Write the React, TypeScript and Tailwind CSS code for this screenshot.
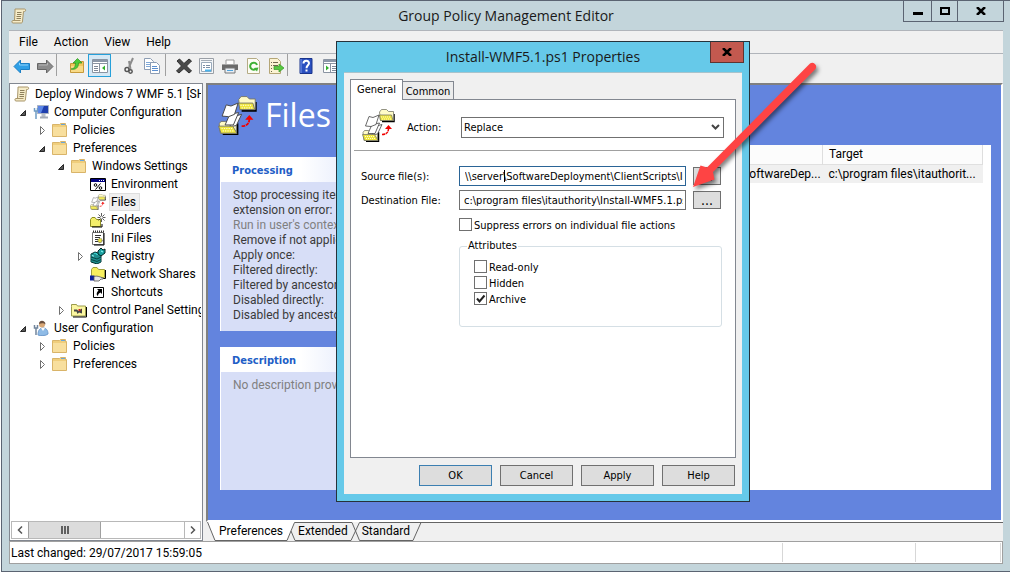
import { useState } from 'react';
import type { ReactNode } from 'react';
import clsx from 'clsx';

/* ---------- Icons ---------- */

function ScrollIcon() {
    return (
        <svg width="16" height="16" viewBox="0 0 16 16">
            <path d="M4 1h9.500c1.500 0 1.500 2.500 0 2.500H12.500L11.500 13c0 1.500-.5 2-1.500 2H2c-1.500 0-1.500-2.500 0-2.500h1.500L4 3z" fill="#f6ecc8" stroke="#a8956a" />
            <path d="M6 4.500h4.500M6 6.500h4.500M5.500 8.500H10M5.500 10.500H10" stroke="#8d7f5c" />
            <path d="M2 12.500h7.500" stroke="#a8956a" />
        </svg>
    );
}

function FolderIcon() {
    return (
        <svg width="16" height="16" viewBox="0 0 16 16">
            <path d="M.5 2.500h7l1-1h5v2h1v11H.5z" fill="#f0ce7c" stroke="#d9b469" />
            <path d="M1 5h13v9H1z" fill="#f8df9e" />
            <path d="M9 2.500h4" stroke="#6aa5d8" />
        </svg>
    );
}

function ComputerIcon() {
    return (
        <svg width="16" height="16" viewBox="0 0 16 16">
            <path d="M4.500 1.500h11v8h-11z" fill="#1f3fae" stroke="#a9b3c4" />
            <path d="M5 2h6L8 9H5z" fill="#5c86e6" />
            <path d="M8.500 10h4v3h-4z" fill="#b9bfc9" />
            <path d="M7 13.500h8" stroke="#a3aab6" strokeWidth="2" />
            <path d="M1.500 4v3h3V4M3 7v8" stroke="#6f9cc4" strokeWidth="1.500" fill="none" />
        </svg>
    );
}

function UserIcon() {
    return (
        <svg width="16" height="16" viewBox="0 0 16 16">
            <path d="M5 15c0-5 2-7 5-7s5 2 5 6c-2 2-8 2-10 1z" fill="#8fbbe6" stroke="#6f9bcc" />
            <path d="M8 8l2 3 2-3" fill="#fff" />
            <circle cx="9" cy="4.500" r="3" fill="#d9a877" />
            <path d="M6 4c0-4.500 6.500-4 6.500.5C11 3 8.500 3 6 4z" fill="#6a5040" />
            <path d="M1.500 5v3h3V5M3 8v7" stroke="#71859c" strokeWidth="1.500" fill="none" />
        </svg>
    );
}

function EnvironmentIcon() {
    return (
        <svg width="16" height="16" viewBox="0 0 16 16">
            <path d="M.5 2.500h15v12H.5z" fill="#fff" stroke="#000" />
            <path d="M1 3h14v3H1z" fill="#000080" />
            <path d="M9 4h1v1H9zM11 4h1v1h-1zM13 4h1v1h-1z" fill="#fff" />
            <path d="M10.500 7.500l-5 6" stroke="#000" />
            <circle cx="5.500" cy="9" r="1.300" fill="none" stroke="#000" />
            <circle cx="10.500" cy="12" r="1.300" fill="none" stroke="#000" />
        </svg>
    );
}

function FilesIcon({ size }: { size: number }) {
    return (
        <svg width={size} height={size} viewBox="0 0 33 33" className="shrink-0">
            {/* target folder */}
            <path d="M32 5v7.500H20" stroke="#000" strokeWidth="1.500" fill="none" />
            <path d="M17.500 3l2-2.500h5l2 2h5v9h-13z" fill="#fffbc8" stroke="#77776a" strokeWidth=".8" />
            <path d="M18.500 11.500l-1-5.500h12l1.500 5.500z" fill="#efe63c" stroke="#77776a" strokeWidth=".8" />
            {/* source folder */}
            <path d="M16.500 23v9.500H4" stroke="#000" strokeWidth="1.500" fill="none" />
            <path d="M1 23.500l1.500-2h4l2 2h7v8H2z" fill="#fffbc8" stroke="#77776a" strokeWidth=".8" />
            {/* pages */}
            <path d="M10 26l3-8.500 7-2-4.500 9.500z" fill="#fff" stroke="#444" strokeWidth=".8" />
            <path d="M6 24.500l4-9 7.500-1.500-4.500 10.500z" fill="#fff" stroke="#444" strokeWidth=".8" />
            <path d="M3.500 17l3.500-9.500 4 1 6-2.500-3 9.500-5 2z" fill="#fff" stroke="#444" strokeWidth=".8" />
            <path d="M2.500 31.500L.5 25.500h12l3.500 6z" fill="#efe63c" stroke="#77776a" strokeWidth=".8" />
            <path d="M3 27.500h9M4 29.500h9M19 8h10M20 10h10" stroke="#fffbd0" strokeDasharray="1 1" />
            {/* transfer arrow */}
            <path d="M20 25.500c4 0 6.500-2 6.500-6" stroke="#f00000" strokeWidth="1.500" strokeDasharray="3 .6" fill="none" />
            <path d="M26.500 16l-3.500 4h7z" fill="#f00000" />
        </svg>
    );
}

function NewFolderIcon() {
    return (
        <svg width="16" height="16" viewBox="0 0 16 16">
            <path d="M.5 7.500l1.500-2h3l1.500 2h4v7H.5z" fill="#f4ef6a" stroke="#8d8d20" />
            <path d="M12 12v3H2" stroke="#000" fill="none" />
            <path d="M11.500 1v9M7.500 5.500h8M8.500 2.500l6 6M14.500 2.500l-6 6" stroke="#333" strokeWidth=".8" />
            <circle cx="11.500" cy="5.500" r="1.200" fill="#fff" />
        </svg>
    );
}

function IniIcon() {
    return (
        <svg width="16" height="16" viewBox="0 0 16 16">
            <path d="M2.500 2.500h11v12h-11z" fill="#fff" stroke="#777" />
            <path d="M3 1.500h11" stroke="#333" strokeWidth="2" strokeDasharray="1 1" />
            <path d="M5 5.500h6M5 7.500h5M5 9.500h3M5 11.500h3" stroke="#333" />
            <circle cx="10" cy="10.500" r="2.200" fill="#e8e040" stroke="#555" strokeDasharray="1 .7" />
            <path d="M14 3v12H4" stroke="#000" fill="none" />
        </svg>
    );
}

function RegistryIcon() {
    return (
        <svg width="16" height="16" viewBox="0 0 16 16">
            <path d="M1 6l4-2 6 2v8l-4 2-6-2z" fill="#35c9c9" stroke="#033" />
            <path d="M1 9l6 2 4-2M1 11.500l6 2 4-2M3 5v10M7 7v9M5 6v9M9 7v8" stroke="#033" strokeWidth=".8" fill="none" />
            <path d="M8 3l3-3 2 2 2-1v4l-4 3-3-2z" fill="#1aa0a0" stroke="#022" />
            <path d="M11 3l2 1M2 7.500l2 .7" stroke="#9ff" />
        </svg>
    );
}

function NetworkIcon() {
    return (
        <svg width="16" height="16" viewBox="0 0 16 16">
            <path d="M1.500 3.500l1.500-2h4l1.500 2h6v8h-13z" fill="#f7ef5e" stroke="#a0a040" />
            <path d="M15.500 4v8.500H12" stroke="#000" fill="none" />
            <path d="M0 9.500h4.500v5H0z" fill="#0a1f9c" />
            <path d="M4 10.500c3-1 5 0 9 1.500 1 1-1 1.500-2 1l-2 2H4z" fill="#e6e6e6" stroke="#555" strokeWidth=".8" />
        </svg>
    );
}

function ShortcutIcon() {
    return (
        <svg width="16" height="16" viewBox="0 0 16 16">
            <path d="M3.500 3.500h10v10h-10z" fill="#fff" stroke="#000" />
            <path d="M7 5h5v5l-1.500-1.500C8.500 9.500 8 10.500 8 12 6 11 6.500 8.500 8.500 6.500z" fill="#000" />
        </svg>
    );
}

function ControlPanelIcon() {
    return (
        <svg width="16" height="16" viewBox="0 0 16 16">
            <path d="M.5 4.500v-2h5l1 1.500h8v10H.5z" fill="#fbf6a0" stroke="#9a9a4a" />
            <path d="M15.500 5v10H2" stroke="#000" fill="none" />
            <path d="M3 7.500h3l1.500 1.500L11 6.500v5l-3-1-1.500 1.500-1-2.500H3z" fill="#444" />
            <path d="M7.500 7h2v2h-2z" fill="#d02020" />
        </svg>
    );
}

/* ---------- Toolbar ---------- */

const toolIcon = { width: 18, height: 18, viewBox: '0 0 18 18', className: 'shrink-0' };

function ArrowToolIcon({ forward }: { forward?: boolean }) {
    return (
        <svg {...toolIcon}>
            <path
                d={forward ? 'M17 9.500L10.500 3v3.500H1.500v6h9V16z' : 'M1 9.500L7.500 3v3.500h9v6h-9V16z'}
                fill={forward ? '#8c8c8c' : '#2f9fe6'}
                stroke={forward ? '#666' : '#1c7fc4'}
            />
            <path d={forward ? 'M3 8h8.500V6' : 'M15 8H6.500V6'} stroke={forward ? '#b5b5b5' : '#8fd2fa'} fill="none" />
        </svg>
    );
}

function UpFolderIcon() {
    return (
        <svg {...toolIcon}>
            <path d="M2.500 6.500h6l1-2h6v11h-13z" fill="#f2c75c" stroke="#c79a3a" />
            <path d="M3 9h12v6H3z" fill="#f8da86" />
            <path d="M3 12c3.500 0 4.500-3 4.500-6H5L9.500 1.500 14 6h-3.500c0 5-3 7-7.500 6z" fill="#4ccb38" stroke="#2c9020" strokeWidth=".7" />
        </svg>
    );
}

function PaneIcon({ flipped }: { flipped?: boolean }) {
    return (
        <svg {...toolIcon}>
            <path d="M1.500 2.500h15v13h-15z" fill="#fff" stroke="#8a94a2" />
            <path d="M2 4h14" stroke="#8c98a8" strokeWidth="2" />
            <path d="M2 6.500h14M8.500 7v8" stroke="#8a94a2" />
            <path d={flipped ? 'M10 9.500h5M10 11.500h5M10 13.500h5' : 'M3 9.500h4M3 11.500h4M3 13.500h4'} stroke="#7d8897" />
            <path d={flipped ? 'M4 8.500v5l3-2.500z' : 'M14 8.500v5L11 11z'} fill="#31b12b" />
        </svg>
    );
}

function CutIcon() {
    return (
        <svg {...toolIcon}>
            <path d="M13 1L9 10M9 4l1.500 8" stroke="#8c8c8c" strokeWidth="2" />
            <circle cx="7" cy="12.500" r="2" fill="none" stroke="#555" strokeWidth="1.500" />
            <circle cx="10.500" cy="14.500" r="1.700" fill="none" stroke="#555" strokeWidth="1.500" />
        </svg>
    );
}

function CopyIcon() {
    return (
        <svg {...toolIcon}>
            <path d="M1.500 1.500h6l3 3v8h-9z" fill="#fff" stroke="#8d9db4" />
            <path d="M3 5.500h5M3 7.500h5M3 9.500h5" stroke="#7fa8d8" />
            <path d="M7.500 5.500h6l3 3v8h-9z" fill="#fff" stroke="#8d9db4" />
            <path d="M9 9.500h5M9 11.500h6M9 13.500h6" stroke="#5b8fd0" />
        </svg>
    );
}

function DeleteIcon() {
    return (
        <svg {...toolIcon}>
            <path d="M2 4l2.500-2L9 6.500 14 2l2.500 2-5 5 5 5-2.500 2-5-4.500L4 16l-2.500-2 5-5z" fill="#4a4a4a" stroke="#2f2f2f" />
        </svg>
    );
}

function PropertiesIcon() {
    return (
        <svg {...toolIcon}>
            <path d="M1.500 1.500h14v15h-14z" fill="#f4f6f8" stroke="#9a9fa6" />
            <path d="M3 3.500h11" stroke="#a4acb6" />
            <path d="M3.500 5.500h10v9h-10z" fill="#fff" stroke="#9aaabb" />
            <path d="M5 8.500h2M8 8.500h4M5 10.500h2M8 10.500h4" stroke="#7b8da4" />
            <path d="M7 13.500h6" stroke="#4ab2ea" strokeWidth="2" />
        </svg>
    );
}

function PrintIcon() {
    return (
        <svg {...toolIcon}>
            <path d="M5 3h8v5H5z" fill="#fff" stroke="#999" />
            <path d="M1 7h16v6H1z" fill="#6a6a6a" />
            <path d="M1 7.500h16" stroke="#a5a5a5" />
            <path d="M4 11h10v5H4z" fill="#e8eef5" stroke="#777" />
            <path d="M6 13.500h6" stroke="#4fa3dc" />
        </svg>
    );
}

function RefreshIcon() {
    return (
        <svg {...toolIcon}>
            <path d="M3.500 1.500h9l3 3v12h-12z" fill="#fdfdf4" stroke="#b5ab85" />
            <path d="M12.300 11.500A3.500 3.500 0 1 1 13 8" fill="none" stroke="#3fb034" strokeWidth="2" />
            <path d="M10 11l4.500-.5L13 14.500z" fill="#3fb034" />
        </svg>
    );
}

function ExportIcon() {
    return (
        <svg {...toolIcon}>
            <path d="M2.500 1.500h8l3 3v12h-11z" fill="#fbf3d2" stroke="#b5a676" />
            <path d="M4 5.500h1M6 5.500h5M4 8.500h1M6 8.500h5M4 11.500h1M4 14.500h1" stroke="#6f684c" />
            <path d="M7 9.500h5V7l5 4-5 4v-2.500H7z" fill="#58c840" stroke="#349a24" strokeWidth=".7" />
        </svg>
    );
}

function HelpIcon() {
    return (
        <svg {...toolIcon}>
            <path d="M3 1.500h12v15H3z" fill="#2b50c0" stroke="#1a348c" />
            <path d="M4 2v14" stroke="#7c9af0" />
            <path d="M6.500 6.500c0-3.500 5.500-3.500 5.500-.3 0 2-2.500 2.300-2.500 5M9.500 12.500v2" stroke="#fff" strokeWidth="2" fill="none" />
        </svg>
    );
}

function ToolButton({ label, active, children }: { label: string; active?: boolean; children: ReactNode }) {
    return (
        <button
            type="button"
            aria-label={label}
            className={clsx(
                'flex h-[23px] w-[23px] shrink-0 items-center justify-center border',
                active ? 'border-[#26a0da] bg-[#d5e8f5]' : 'border-transparent',
            )}
        >
            {children}
        </button>
    );
}

function ToolDivider() {
    return <span className="h-[22px] w-px shrink-0 bg-[#a0a0a0]" />;
}

function Toolbar() {
    return (
        <div className="flex h-7 items-start pl-px">
            <ToolButton label="Back"><ArrowToolIcon /></ToolButton>
            <ToolButton label="Forward"><ArrowToolIcon forward /></ToolButton>
            <ToolDivider />
            <div className="flex pl-2">
                <ToolButton label="Up one level"><UpFolderIcon /></ToolButton>
                <ToolButton label="Show or hide console tree" active><PaneIcon /></ToolButton>
            </div>
            <div className="flex pr-0.5 pl-1.5">
                <ToolButton label="Cut"><CutIcon /></ToolButton>
                <ToolButton label="Copy"><CopyIcon /></ToolButton>
            </div>
            <ToolDivider />
            <div className="flex pl-1.5">
                <ToolButton label="Delete"><DeleteIcon /></ToolButton>
                <ToolButton label="Properties"><PropertiesIcon /></ToolButton>
                <ToolButton label="Print"><PrintIcon /></ToolButton>
                <ToolButton label="Refresh"><RefreshIcon /></ToolButton>
                <ToolButton label="Export list"><ExportIcon /></ToolButton>
            </div>
            <ToolDivider />
            <div className="flex gap-0.5 pl-1.5">
                <ToolButton label="Help"><HelpIcon /></ToolButton>
                <ToolButton label="Show or hide action pane"><PaneIcon flipped /></ToolButton>
            </div>
        </div>
    );
}

/* ---------- Console tree ---------- */

type TreeItem = {
    label: string;
    icon: ReactNode;
    indent: string;
    state?: 'open' | 'closed';
    selected?: boolean;
};

const LEVELS = ['pl-0', 'pl-1', 'pl-[23px]', 'pl-[42px]', 'pl-[61px]'];

const treeItems: TreeItem[] = [
    { label: 'Deploy Windows 7 WMF 5.1 [SH', icon: <ScrollIcon />, indent: LEVELS[0] },
    { label: 'Computer Configuration', icon: <ComputerIcon />, indent: LEVELS[1], state: 'open' },
    { label: 'Policies', icon: <FolderIcon />, indent: LEVELS[2], state: 'closed' },
    { label: 'Preferences', icon: <FolderIcon />, indent: LEVELS[2], state: 'open' },
    { label: 'Windows Settings', icon: <FolderIcon />, indent: LEVELS[3], state: 'open' },
    { label: 'Environment', icon: <EnvironmentIcon />, indent: LEVELS[4] },
    { label: 'Files', icon: <FilesIcon size={16} />, indent: LEVELS[4], selected: true },
    { label: 'Folders', icon: <NewFolderIcon />, indent: LEVELS[4] },
    { label: 'Ini Files', icon: <IniIcon />, indent: LEVELS[4] },
    { label: 'Registry', icon: <RegistryIcon />, indent: LEVELS[4], state: 'closed' },
    { label: 'Network Shares', icon: <NetworkIcon />, indent: LEVELS[4] },
    { label: 'Shortcuts', icon: <ShortcutIcon />, indent: LEVELS[4] },
    { label: 'Control Panel Settings', icon: <ControlPanelIcon />, indent: LEVELS[3], state: 'closed' },
    { label: 'User Configuration', icon: <UserIcon />, indent: LEVELS[1], state: 'open' },
    { label: 'Policies', icon: <FolderIcon />, indent: LEVELS[2], state: 'closed' },
    { label: 'Preferences', icon: <FolderIcon />, indent: LEVELS[2], state: 'closed' },
];

function TreeArrow({ state }: { state?: 'open' | 'closed' }) {
    return (
        <svg width="19" height="16" viewBox="0 0 19 16" className="shrink-0">
            {state === 'open' && <path d="M11.500 6.500v5h-5z" fill="#595959" stroke="#262626" />}
            {state === 'closed' && <path d="M7.500 4.500v8l4-4z" fill="#fff" stroke="#707070" />}
        </svg>
    );
}

function ConsoleTree() {
    return (
        <div className="flex w-[194px] shrink-0 flex-col border border-[#828790] bg-white">
            <ul role="tree" className="flex-1 overflow-hidden pt-px pr-px">
                {treeItems.map((item, i) => (
                    <li
                        key={i}
                        role="treeitem"
                        aria-selected={!!item.selected}
                        className={clsx('flex h-[18px] items-center overflow-hidden', item.indent)}
                    >
                        {i > 0 ? <TreeArrow state={item.state} /> : <span className="w-1 shrink-0" />}
                        <span className="w-4 shrink-0">{item.icon}</span>
                        <span
                            className={clsx(
                                'ml-[3px] border px-px leading-4 whitespace-nowrap',
                                item.selected ? 'border-[#dedede] bg-[#f0f0f0] pr-[3px]' : 'border-transparent',
                            )}
                        >
                            {item.label}
                        </span>
                    </li>
                ))}
            </ul>
            <div className="mx-px mb-px flex h-[18px] border border-[#b8b8b8]">
                <button type="button" aria-label="Scroll left" className="flex w-4 items-center justify-center">
                    <svg width="6" height="8" viewBox="0 0 6 8"><path d="M5 .5L1.500 4 5 7.500" fill="none" stroke="#555" strokeWidth="1.500" /></svg>
                </button>
                <div className="flex w-[73px] items-center justify-center gap-px border-x border-[#a0a0a0] bg-[#dcdcdc]">
                    <span className="h-2 w-0.5 bg-[#606060]" />
                    <span className="h-2 w-0.5 bg-[#606060]" />
                    <span className="h-2 w-0.5 bg-[#606060]" />
                </div>
                <div className="flex-1" />
                <button type="button" aria-label="Scroll right" className="flex w-4 items-center justify-center border-l border-[#b8b8b8]">
                    <svg width="6" height="8" viewBox="0 0 6 8"><path d="M1 .5L4.500 4 1 7.500" fill="none" stroke="#555" strokeWidth="1.500" /></svg>
                </button>
            </div>
        </div>
    );
}

/* ---------- Details pane ---------- */

const processing = [
    { text: 'Stop processing items on this' },
    { text: 'extension on error:' },
    { text: "Run in user's context:", muted: true },
    { text: 'Remove if not applied:' },
    { text: 'Apply once:' },
    { text: 'Filtered directly:' },
    { text: 'Filtered by ancestor:' },
    { text: 'Disabled directly:' },
    { text: 'Disabled by ancestor:' },
];

function InfoCard({ title, className, children }: { title: string; className?: string; children: ReactNode }) {
    return (
        <section className={clsx('flex flex-col border-l border-white bg-[#d7def7]', className)}>
            <h2 className="h-[25px] bg-linear-to-r from-white from-40% to-[#c6d3f7] pl-[11px] font-['DejaVu_Sans_Condensed','DejaVu_Sans',sans-serif] text-[11px] leading-7 font-bold text-[#215dc6]">
                {title}
            </h2>
            <div className="pt-1.5 pb-2 pl-3 leading-[15px] whitespace-nowrap text-[#3a3a3a]">{children}</div>
        </section>
    );
}

function DetailsPane() {
    return (
        <main className="flex flex-1 flex-col border-2 border-t-[#808080] border-r-white border-b-white border-l-[#808080] bg-[#6384de] pr-2.5 pb-[30px] pl-2.5">
            <div className="flex h-[60px] items-center gap-2 text-white">
                <FilesIcon size={39} />
                <h1 className="font-['Open_Sans','Noto_Sans',sans-serif] text-[32px] leading-10">Files</h1>
            </div>
            <div className="flex flex-1 gap-5 pl-0.5">
                <div className="flex w-[200px] shrink-0 flex-col gap-4 pt-3">
                    <InfoCard title="Processing">
                        {processing.map((line) => (
                            <p key={line.text} className={line.muted ? 'text-[#808080]' : undefined}>{line.text}</p>
                        ))}
                    </InfoCard>
                    <InfoCard title="Description" className="flex-1">
                        <p className="text-[#808080]">No description provided.</p>
                    </InfoCard>
                </div>
                <div className="flex-1 bg-white pr-2">
                    <table className="w-full table-fixed border-collapse text-left whitespace-nowrap">
                        <colgroup>
                            <col />
                            <col className="w-[50px]" />
                            <col className="w-[62px]" />
                            <col className="w-[134px]" />
                            <col className="w-[160px]" />
                        </colgroup>
                        <thead>
                            <tr className="h-[19px] border-b border-[#e0e0e0] bg-[#fcfcfc]">
                                {['Name', 'Order', 'Action', 'Source', 'Target'].map((head) => (
                                    <th key={head} className="border-r border-[#dedede] px-1.5 leading-4 font-normal">{head}</th>
                                ))}
                            </tr>
                        </thead>
                        <tbody>
                            <tr className="h-[19px] bg-[#f0f0f0]">
                                <td className="truncate px-1.5 leading-4">Install-WMF5.1.ps1</td>
                                <td className="px-1.5 leading-4">1</td>
                                <td className="px-1.5 leading-4">Replace</td>
                                <td className="px-1.5 text-right leading-4">\\server\SoftwareDep...</td>
                                <td className="px-1.5 leading-4">c:\program files\itauthorit...</td>
                            </tr>
                        </tbody>
                    </table>
                </div>
            </div>
        </main>
    );
}

function ViewTabs() {
    return (
        <div role="tablist" className="flex h-[19px] pl-px leading-[19px]">
            <svg width="10" height="19" viewBox="0 0 10 19">
                <path d="M0 0h10v18H8z" fill="#fff" />
                <path d="M.5 0L8 18.500h2" fill="none" stroke="#646464" />
            </svg>
            <button type="button" role="tab" aria-selected className="border-b border-[#646464] bg-white px-0.5">Preferences</button>
            <svg width="13" height="19" viewBox="0 0 13 19">
                <path d="M0 0h10L2 18H0z" fill="#fff" />
                <path d="M0 18.500h2L9.500.5H13M6 9l4 9.500h3" fill="none" stroke="#646464" />
            </svg>
            <button type="button" role="tab" aria-selected={false} className="border-y border-[#646464] leading-[17px]">Extended</button>
            <svg width="14" height="19" viewBox="0 0 14 19">
                <path d="M0 18.500h3L11.500.5H14M0 .5h4L11.500 18.500H14" fill="none" stroke="#646464" />
            </svg>
            <button type="button" role="tab" aria-selected={false} className="border-y border-[#646464] leading-[17px]">Standard</button>
            <svg width="12" height="19" viewBox="0 0 12 19">
                <path d="M0 18.500h3L11 .5" fill="none" stroke="#646464" />
                <path d="M0 .5h12" stroke="#646464" />
            </svg>
            <span className="flex-1 border-t border-[#646464]" />
        </div>
    );
}

/* ---------- Properties dialog ---------- */

function Checkbox({ label, initial = false }: { label: string; initial?: boolean }) {
    const [checked, setChecked] = useState(initial);
    return (
        <label className="flex h-4 items-start gap-0.5 self-start leading-4">
            <span className="grid">
                <input
                    type="checkbox"
                    checked={checked}
                    onChange={(e) => setChecked(e.target.checked)}
                    className="col-start-1 row-start-1 h-[13px] w-[13px] appearance-none border border-[#707070] bg-white"
                />
                {checked && (
                    <svg width="13" height="13" viewBox="0 0 13 13" className="pointer-events-none col-start-1 row-start-1">
                        <path d="M3 6.500l2.500 3L10.500 3.500" fill="none" stroke="#212121" strokeWidth="2" />
                    </svg>
                )}
            </span>
            {label}
        </label>
    );
}

function BrowseButton({ label }: { label: string }) {
    return (
        <button type="button" aria-label={label} className="h-[18px] w-7 border border-[#707070] bg-[#dddddd] text-sm leading-3">
            ...
        </button>
    );
}

function PropertiesDialog() {
    return (
        <div
            role="dialog"
            aria-labelledby="dialog-title"
            className="absolute top-[41px] left-[336px] w-[414px] border border-[#26323a] bg-[#66c9e9] px-[7px] pb-[7px] font-['DejaVu_Sans_Condensed','DejaVu_Sans',sans-serif] text-[11px]"
        >
            <div className="grid h-[30px]">
                <h2 id="dialog-title" className="col-start-1 row-start-1 text-center font-['Open_Sans','Noto_Sans',sans-serif] text-sm leading-[30px] text-[#1a1a1a]">
                    Install-WMF5.1.ps1 Properties
                </h2>
                <button
                    type="button"
                    aria-label="Close"
                    className="col-start-1 row-start-1 -mr-0.5 flex h-[21px] w-[34px] items-center justify-center justify-self-end border border-t-0 border-[#5e3431] bg-[#c3594f]"
                >
                    <svg width="10" height="8" viewBox="0 0 10 8"><path d="M1 0l8 8M9 0L1 8" stroke="#000" strokeWidth="2.500" /></svg>
                </button>
            </div>
            <div className="border-t border-[#a8c3cc] bg-[#f0f0f0] px-[6px] pt-[6px] pb-2">
                <div role="tablist" className="flex h-5 items-end">
                    <button type="button" role="tab" aria-selected className="-mb-px h-[21px] w-[53px] border border-b-0 border-[#828790] bg-white leading-[18px]">
                        General
                    </button>
                    <button type="button" role="tab" aria-selected={false} className="h-[18px] w-[51px] border border-b-0 border-l-0 border-[#828790] bg-[#ececec] pt-px leading-[17px]">
                        Common
                    </button>
                </div>
                <div className="h-[359px] border border-[#828790] bg-white px-[3px]">
                    <div className="flex h-[51px] items-center border-b border-[#a0a0a0] pl-2">
                        <FilesIcon size={33} />
                        <label htmlFor="action" className="w-[66px] shrink-0 pt-1.5 pl-3">Action:</label>
                        <div className="grid w-[263px] items-center pt-1">
                            <select id="action" className="col-start-1 row-start-1 h-[21px] appearance-none border border-[#707070] bg-white px-0.5 pt-0.5">
                                <option>Replace</option>
                                <option>Create</option>
                                <option>Update</option>
                                <option>Delete</option>
                            </select>
                            <svg width="9" height="7" viewBox="0 0 9 7" className="pointer-events-none col-start-1 row-start-1 mr-1 justify-self-end">
                                <path d="M1 1l3.500 3.500L8 1" fill="none" stroke="#444" strokeWidth="2" />
                            </svg>
                        </div>
                    </div>
                    <div className="grid grid-cols-[98px_227px_35px] items-center gap-y-1 pt-[15px] pl-[7px]">
                        <label htmlFor="source" className="pt-0.5">Source file(s):</label>
                        <div className="relative h-5">
                            <input
                                id="source"
                                defaultValue="\\server\SoftwareDeployment\ClientScripts\Install-WMF5.1.ps1"
                                className="h-5 w-full border border-[#2a6496] bg-white pt-px pr-0.5 pl-[5px] outline-none"
                            />
                            {/* caret */}
                            <span className="absolute top-1 left-[45px] h-3 w-px bg-black" />
                        </div>
                        <span className="pl-[7px]"><BrowseButton label="Browse source" /></span>
                        <label htmlFor="destination" className="pt-0.5">Destination File:</label>
                        <input
                            id="destination"
                            defaultValue="c:\program files\itauthority\Install-WMF5.1.ps1"
                            className="h-5 w-full border border-[#707070] bg-white pt-px pr-0.5 pl-1 outline-none"
                        />
                        <span className="pl-[7px]"><BrowseButton label="Browse destination" /></span>
                    </div>
                    <div className="flex flex-col pt-2 pl-[105px]">
                        <Checkbox label="Suppress errors on individual file actions" />
                        <fieldset className="mt-[5px] h-[88px] w-[263px] rounded-[3px] border border-[#d5dfe5] pl-3.5">
                            <legend className="-ml-[7px] px-px leading-[14px]">Attributes</legend>
                            <div className="flex flex-col pt-[7px]">
                                <Checkbox label="Read-only" />
                                <Checkbox label="Hidden" />
                                <Checkbox label="Archive" initial />
                            </div>
                        </fieldset>
                    </div>
                </div>
                <div className="flex justify-end gap-2 pt-[7px] pr-px">
                    {['OK', 'Cancel', 'Apply', 'Help'].map((name) => (
                        <button
                            key={name}
                            type="button"
                            className={clsx('h-[21px] w-[73px] border bg-[#dddddd] pt-0.5', name === 'OK' ? 'border-[#3c7fb1]' : 'border-[#707070]')}
                        >
                            {name}
                        </button>
                    ))}
                </div>
            </div>
        </div>
    );
}

/* Red callout arrow pointing at the source path */
function CalloutArrow() {
    return (
        <svg width="140" height="140" viewBox="0 0 140 140" className="pointer-events-none absolute top-[56px] left-[686px] drop-shadow-[2px_3px_2px_rgba(0,0,0,0.5)]">
            <path d="M124 7.500a4 4 0 0 1 5.500 5.500L27 116l1.500 7.500L7 131l7.500-21.500 6.500 2z" fill="#fe4444" />
        </svg>
    );
}

/* ---------- Window ---------- */

export default function App() {
    return (
        <div className="relative flex min-h-screen flex-col bg-white pl-px font-['Roboto','Open_Sans',sans-serif] text-xs text-black">
            <div className="flex flex-1 flex-col border-y border-l border-[#5b6472] bg-[#c3d5db] px-[7px] pb-[7px]">
                <header className="grid h-[29px]">
                    <span className="col-start-1 row-start-1 self-center pl-0.5"><ScrollIcon /></span>
                    <h1 className="col-start-1 row-start-1 text-center font-['Open_Sans','Noto_Sans',sans-serif] text-sm leading-[30px] text-[#1a1a1a]">Group Policy Management Editor</h1>
                    <div className="col-start-1 row-start-1 -mr-px flex h-[21px] justify-self-end border border-t-0 border-[#5b6472]">
                        <button type="button" aria-label="Minimize" className="flex w-[28px] items-center justify-center border-r border-[#5b6472] pt-1">
                            <span className="h-[3px] w-2.5 bg-black" />
                        </button>
                        <button type="button" aria-label="Maximize" className="flex w-[26px] items-center justify-center border-r border-[#5b6472]">
                            <span className="h-2 w-2.5 border-2 border-black" />
                        </button>
                        <button type="button" aria-label="Close" className="flex w-[45px] items-center justify-center">
                            <svg width="10" height="8" viewBox="0 0 10 8"><path d="M1 0l8 8M9 0L1 8" stroke="#000" strokeWidth="2.500" /></svg>
                        </button>
                    </div>
                </header>
                <div className="flex flex-1 flex-col bg-[#f0f0f0]">
                    <nav className="flex h-6 items-center gap-4 border-y border-[#b0b4ba] px-2.5">
                        {['File', 'Action', 'View', 'Help'].map((name) => (
                            <button key={name} type="button">{name}</button>
                        ))}
                    </nav>
                    <Toolbar />
                    <div className="flex flex-1 gap-[3px] pt-px">
                        <ConsoleTree />
                        <div className="flex flex-1 flex-col">
                            <DetailsPane />
                            <ViewTabs />
                        </div>
                    </div>
                    <footer className="flex h-[23px] border border-[#a0a0a0] bg-white py-px pr-px leading-[21px]">
                        <p className="flex-1 border-r border-[#d7d7d7] pl-px">Last changed: 29/07/2017 15:59:05</p>
                        <span className="w-[133px] border-r border-[#d7d7d7]" />
                        <span className="w-[85px] border-r border-[#d7d7d7]" />
                    </footer>
                </div>
            </div>
            <PropertiesDialog />
            <CalloutArrow />
        </div>
    );
}
